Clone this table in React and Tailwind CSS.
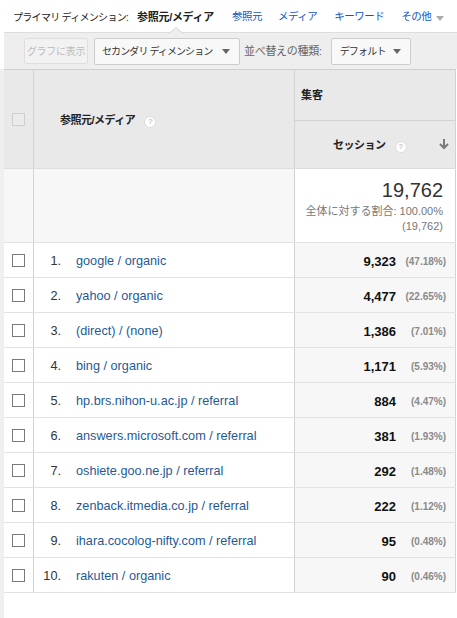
import React from "react";

const rows = [
  { name: "google / organic", value: "9,323", pct: "(47.18%)" },
  { name: "yahoo / organic", value: "4,477", pct: "(22.65%)" },
  { name: "(direct) / (none)", value: "1,386", pct: "(7.01%)" },
  { name: "bing / organic", value: "1,171", pct: "(5.93%)" },
  { name: "hp.brs.nihon-u.ac.jp / referral", value: "884", pct: "(4.47%)" },
  { name: "answers.microsoft.com / referral", value: "381", pct: "(1.93%)" },
  { name: "oshiete.goo.ne.jp / referral", value: "292", pct: "(1.48%)" },
  { name: "zenback.itmedia.co.jp / referral", value: "222", pct: "(1.12%)" },
  { name: "ihara.cocolog-nifty.com / referral", value: "95", pct: "(0.48%)" },
  { name: "rakuten / organic", value: "90", pct: "(0.46%)" },
];

const Caret = ({ color = "#666" }) => (
  <svg width="8" height="5" viewBox="0 0 8 5">
    <path d="M0 0h8L4 5z" fill={color} />
  </svg>
);

const Help = () => (
  <span className="inline-flex w-[12px] h-[12px] rounded-full bg-white border border-[#dcdcdc] items-center justify-center text-[8px] font-bold text-[#c8c8c8] leading-none">
    ?
  </span>
);

const App = () => {
  return (
    <div className="w-[457px] h-[618px] bg-white overflow-hidden font-['Liberation_Sans','Noto_Sans_CJK_JP',sans-serif] text-[#222]">
      {/* primary dimension bar */}
      <div className="h-[32px] flex items-center pl-[13px] pt-[2px] whitespace-nowrap">
        <span className="text-[10px] tracking-[-0.7px] text-[#222]">プライマリ ディメンション:</span>
        <span className="ml-[9px] text-[11px] tracking-[-0.3px] font-bold text-[#222]">参照元/メディア</span>
        <span className="ml-[18px] text-[10.5px] tracking-[-0.5px] text-[#1155cc]">参照元</span>
        <span className="ml-[16px] text-[10.5px] tracking-[-0.5px] text-[#1155cc]">メディア</span>
        <span className="ml-[17px] text-[10.5px] tracking-[-0.5px] text-[#1155cc]">キーワード</span>
        <span className="ml-[17px] text-[10.5px] tracking-[-0.5px] text-[#1155cc]">その他</span>
        <span className="ml-[5px] mt-[2px]">
          <Caret color="#aaa" />
        </span>
      </div>

      {/* toolbar */}
      <div className="relative h-[37px] ml-[4px] bg-[#eeeeee] border-t border-[#dddddd] flex items-center pl-[20px] whitespace-nowrap">
        <svg className="absolute left-[165px] top-[-6px]" width="14" height="7" viewBox="0 0 14 7">
          <path d="M0 6.5L7 0.5L14 6.5" fill="#eeeeee" stroke="#d4d4d4" />
        </svg>
        <div className="w-[64px] h-[26px] rounded-[2px] border border-[#dedede] bg-[#f2f2f2] flex items-center justify-center text-[10px] tracking-[-0.3px] text-[#bbbbbb]">
          グラフに表示
        </div>
        <div className="ml-[6px] w-[146px] h-[27px] rounded-[2px] border border-[#cccccc] bg-[#f8f8f8] flex items-center pl-[7px] pr-[9px] justify-between text-[10px] tracking-[-0.9px] text-[#333]">
          <span>セカンダリ ディメンション</span>
          <Caret />
        </div>
        <span className="ml-[4px] text-[11px] tracking-[-0.3px] text-[#666]">並べ替えの種類:</span>
        <div className="ml-[9px] w-[80px] h-[27px] rounded-[2px] border border-[#cccccc] bg-[#f8f8f8] flex items-center pl-[8px] pr-[9px] justify-between text-[10px] tracking-[-0.8px] text-[#333]">
          <span>デフォルト</span>
          <Caret />
        </div>
      </div>

      <div className="flex">
        <div className="w-[4px] bg-[#efefef] shrink-0" />
        <div className="w-[452px] border-t border-[#cfcfcf]">
          {/* header */}
          <div className="flex h-[99px] bg-[#e9e9e9] border-b border-[#dddddd]">
            <div className="w-[30px] border-r border-[#d2d2d2] flex items-center justify-center">
              <div className="w-[13px] h-[13px] border border-[#cfcfcf] bg-[#ebebeb]" />
            </div>
            <div className="w-[261px] border-r border-[#d2d2d2] flex items-center pl-[26px] pt-[3px] text-[11px] font-bold tracking-[-0.5px] text-[#222]">
              <span>参照元/メディア</span>
              <span className="ml-[9px] mb-[1px]">
                <Help />
              </span>
            </div>
            <div className="w-[161px] border-r border-[#d2d2d2] flex flex-col">
              <div className="h-[51px] border-b border-[#d2d2d2] flex items-center pl-[6px] pt-[1px] text-[11px] font-bold text-[#222]">
                集客
              </div>
              <div className="flex-1 flex items-center pl-[38px] pr-[6px] pt-[2px] text-[11px] font-bold tracking-[-0.5px] text-[#222]">
                <span>セッション</span>
                <span className="ml-[9px]">
                  <Help />
                </span>
                <svg className="ml-auto mb-[3px]" width="10" height="11" viewBox="0 0 10 11">
                  <path d="M5 0v9M1 5l4 4 4-4" stroke="#7a7a7a" strokeWidth="2" fill="none" />
                </svg>
              </div>
            </div>
          </div>

          {/* total */}
          <div className="flex h-[74px] border-b border-[#e2e2e2]">
            <div className="w-[30px] bg-[#f7f7f7] border-r border-[#d2d2d2]" />
            <div className="w-[261px] bg-[#f7f7f7] border-r border-[#d2d2d2]" />
            <div className="w-[161px] bg-white border-r border-[#d2d2d2] flex flex-col items-end pr-[12px] pt-[9px]">
              <span className="text-[20px] leading-[24px] text-[#333]">19,762</span>
              <span className="text-[11px] leading-[15px] text-[#777] mt-[2px]">全体に対する割合: 100.00%</span>
              <span className="text-[11px] leading-[15px] text-[#777]">(19,762)</span>
            </div>
          </div>

          {/* rows */}
          {rows.map((r, i) => (
            <div key={i} className="flex h-[35px] border-b border-[#e2e2e2]">
              <div className="w-[30px] bg-white border-r border-[#d2d2d2] flex items-center justify-center">
                <div className="w-[13px] h-[13px] border border-[#7a7a7a] bg-white" />
              </div>
              <div className="w-[261px] bg-white border-r border-[#d2d2d2] flex items-center pt-[3px] text-[12.7px]">
                <span className="w-[27px] text-right text-[#333]">{i + 1}.</span>
                <span className="ml-[15px] text-[#1f5a96] whitespace-nowrap">{r.name}</span>
              </div>
              <div className="w-[161px] bg-[#f7f7f7] border-r border-[#d2d2d2] flex items-center justify-end pr-[9px] pt-[3px]">
                <span className="text-[13px] font-bold text-[#111]">{r.value}</span>
                <span className="w-[50px] text-right text-[10px] font-bold text-[#8a8a8a]">{r.pct}</span>
              </div>
            </div>
          ))}
          <div className="h-[40px] bg-white" />
        </div>
      </div>
    </div>
  );
};

export default App;
